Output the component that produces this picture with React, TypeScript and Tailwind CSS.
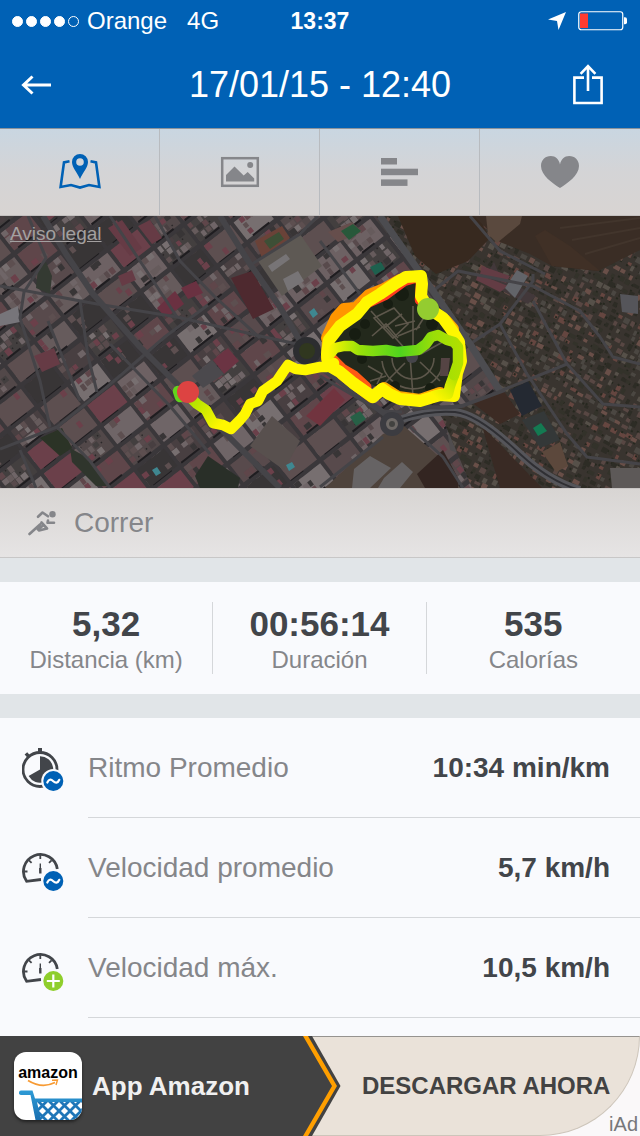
import type { ReactNode } from "react";

const STATS = [
  { value: "5,32", label: "Distancia (km)" },
  { value: "00:56:14", label: "Duración" },
  { value: "535", label: "Calorías" },
];

/* ---------- Icons ---------- */

const BackIcon = () => (
  <svg width="32" height="20" viewBox="0 0 32 20" fill="none" stroke="#fff" strokeWidth="3">
    <path d="M31 10H3.5M12.5 1.5L3.5 10l9 8.5" />
  </svg>
);

const ShareIcon = () => (
  <svg width="32" height="42" viewBox="0 0 32 42" fill="none" stroke="#fff" strokeWidth="2.6">
    <path d="M12 13.600H2.400v25.400h27.200V13.600H20M16 27V2.500M8.600 9.800L16 2.200l7.400 7.600" />
  </svg>
);

const LocationIcon = () => (
  <svg width="18" height="18" viewBox="0 0 18 18" fill="#fff">
    <path d="M18 0L10.5 18L9 9L0 7.6Z" />
  </svg>
);

const BatteryIcon = () => (
  <svg width="50" height="20" viewBox="0 0 50 20" fill="none">
    <rect x="0.75" y="0.75" width="44" height="18" rx="2.5" stroke="#fff" strokeWidth="1.2" />
    <rect x="2" y="2.5" width="8" height="14.5" fill="#ff3b30" />
    <path d="M46 6.2h1a2 2 0 0 1 2 2v3a2 2 0 0 1-2 2h-1z" fill="#fff" />
  </svg>
);

const MapTabIcon = () => (
  <svg width="42" height="36" viewBox="0 0 42 36" fill="none">
    <path
      d="M10.5 7.3L5 8.4L1.6 33l10.4-2l9 2.6l9-2.6l10.4 2L37 8.4l-5.5-1.1"
      stroke="#0061b5"
      strokeWidth="2.6"
    />
    <path
      fillRule="evenodd"
      d="M21 0a8 8 0 0 0-8 8c0 5.4 5 10 8 17c3-7 8-11.6 8-17a8 8 0 0 0-8-8zM21 4.2a3.8 3.8 0 1 1 0 7.6a3.8 3.8 0 0 1 0-7.6z"
      fill="#0061b5"
    />
  </svg>
);

const PhotoTabIcon = () => (
  <svg width="40" height="32" viewBox="0 0 40 32" fill="#85868a">
    <rect x="2.2" y="2.2" width="35.6" height="27.6" fill="none" stroke="#85868a" strokeWidth="2.5" />
    <path d="M6 25.5v-6.5l8.500-8.5l9.2 9l4-3.5l6.5 6.5v3z" />
    <circle cx="30.2" cy="9" r="3" />
  </svg>
);

const SplitsTabIcon = () => (
  <svg width="38" height="28" viewBox="0 0 38 28" fill="#85868a">
    <rect width="16" height="6.5" />
    <rect y="10.7" width="37" height="6.5" />
    <rect y="21.4" width="26.5" height="6.5" />
  </svg>
);

const HeartTabIcon = () => (
  <svg width="38" height="32" viewBox="0 0 38 32" fill="#85868a">
    <path d="M19 32C12 27.500 0 19.500 0 10C0 4 4.200 0 9.800 0C14.500 0 18 3.200 19 8.500C20 3.200 23.500 0 28.200 0C33.800 0 38 4 38 10C38 19.500 26 27.500 19 32Z" />
  </svg>
);

const RunnerIcon = () => (
  <svg
    width="28"
    height="26"
    viewBox="0 0 28 26"
    fill="none"
    stroke="#85868a"
    strokeWidth="2.6"
    strokeLinecap="round"
    strokeLinejoin="round"
  >
    <circle cx="24.5" cy="4.2" r="3.2" fill="#85868a" stroke="none" />
    <path d="M10 6.8L14.5 2.5L20 6.3" />
    <path d="M20 10.5L19.5 12.8L26 12.8" />
    <path d="M1.5 24L12 14.5M13.5 12.5L19 18.5L11 20.5M15 15.5L10 19.5" />
  </svg>
);

const AverageBadge = () => (
  <>
    <circle cx="31.3" cy="33" r="12" fill="#f9fafd" />
    <circle cx="31.3" cy="33" r="10" fill="#0061b5" />
    <path
      d="M25.3 34.5c1.8-4 4-3.2 6-1.3s4.4 2.4 6-1.4"
      fill="none"
      stroke="#fff"
      strokeWidth="2.2"
      strokeLinecap="round"
    />
  </>
);

const MaxBadge = () => (
  <>
    <circle cx="31.3" cy="33" r="12" fill="#f9fafd" />
    <circle cx="31.3" cy="33" r="10" fill="#8fce2c" />
    <path d="M31.3 26.5v13M24.8 33h13" stroke="#fff" strokeWidth="2.2" />
  </>
);

const PaceIcon = () => (
  <svg width="44" height="44" viewBox="0 0 44 44" fill="none">
    <circle cx="18" cy="21.5" r="17" stroke="#42454a" strokeWidth="2.8" />
    <path d="M18 21.5V8.3A13.2 13.2 0 1 1 6.6 28.1Z" fill="#42454a" />
    <path d="M16 0h4v4.5h-4zM2.6 6.5l2.6-2.3l3 3.2l-2.6 2.3z" fill="#42454a" />
    <AverageBadge />
  </svg>
);

const SpeedIcon = ({ children }: { children: ReactNode }) => (
  <svg width="44" height="44" viewBox="0 0 44 44" fill="none" stroke="#42454a">
    <path d="M19 31.5L4.6 33.3A17 17 0 1 1 35.3 21" strokeWidth="2.8" />
    <path
      d="M18.3 7v4M2 23.5h3.5M7 12.3l2.6 2.6M29.6 12.3L27 14.9M31.5 23.5h3"
      strokeWidth="1.8"
    />
    <path d="M18.3 15.5v8" strokeWidth="1.4" />
    <path d="M18.3 20v5.5" strokeWidth="2.4" />
    <g stroke="none">{children}</g>
  </svg>
);

const AmazonAppIcon = () => (
  <svg
    width="68"
    height="68"
    viewBox="0 0 68 68"
    className="shrink-0 rounded-xl bg-white shadow-[0_2px_3px_#222]"
  >
    <defs>
      <linearGradient id="cart" x1="0" y1="0" x2="0" y2="1">
        <stop offset="0" stopColor="#2e9bd6" />
        <stop offset="1" stopColor="#1a6fb0" />
      </linearGradient>
      <pattern id="basket" x="23" y="48" width="11" height="11" patternUnits="userSpaceOnUse">
        <path d="M-1 -1L12 12M12 -1L-1 12" stroke="#1f76b8" strokeWidth="2.8" />
      </pattern>
    </defs>
    <text
      x="34"
      y="26"
      textAnchor="middle"
      fontFamily="Liberation Sans, sans-serif"
      fontWeight="700"
      fontSize="16"
    >
      amazon
    </text>
    <path d="M14 28.5Q28 37 41 30.5" fill="none" stroke="#f79b34" strokeWidth="1.8" />
    <path d="M38 28.3L43.5 28L42 33" fill="none" stroke="#f79b34" strokeWidth="1.4" />
    <path d="M22 48H68V68H26Z" fill="url(#basket)" />
    <path
      d="M5 40.5a2 2 0 0 1 2-2h11.500L21 46.5h47v3.500H23L27 68h-5.500L16.500 43H7a2 2 0 0 1-2-2.5z"
      fill="url(#cart)"
    />
  </svg>
);

/* ---------- Satellite map ---------- */

const createRandom = (seed: number) => () => {
  seed = (seed * 1664525 + 1013904223) % 4294967296;
  return seed / 4294967296;
};

const ROOFS = ["#5d4f50", "#665b5c", "#524849", "#6d6163", "#483f41", "#6b404a", "#6f6567", "#584a4c", "#433f3f", "#776f70", "#5f464a", "#383536"];
const HOUSES = ["#584743", "#654640", "#2d2c25", "#4b4742", "#33322a", "#694f48", "#565049"];

type PathMap = Record<string, string>;

const addRect = (paths: PathMap, fill: string, x: number, y: number, w: number, h: number) => {
  paths[fill] = `${paths[fill] ?? ""}M${x.toFixed(1)} ${y.toFixed(1)}h${w.toFixed(1)}v${h.toFixed(1)}h${(-w).toFixed(1)}z`;
};

// City blocks, each filled with small roofs
const buildBlocks = () => {
  const random = createRandom(17);
  const paths: PathMap = {};
  for (let bx = -200; bx < 560; bx += 38) {
    for (let by = -40; by < 660; by += 27) {
      const tone = Math.floor(random() * ROOFS.length);
      addRect(paths, ROOFS[tone], bx, by, 34, 22);
      for (let x = 0; x < 30; x += 6) {
        for (let y = 0; y < 20; y += 7) {
          if (random() < 0.75) {
            const pick = Math.floor(random() * ROOFS.length);
            addRect(paths, ROOFS[pick], bx + x, by + y, 4 + random() * 3, 5 + random() * 2);
          }
          if (random() < 0.4) {
            addRect(paths, "#2a2728", bx + x + random() * 3, by + y + random() * 4, 1.5, 1.5);
          }
        }
      }
      addRect(paths, "#1f1d20", bx + random() * 8, by + 21, 12 + random() * 14, 2);
    }
  }
  return Object.entries(paths);
};

// Detached houses and trees east of the avenue
const buildHouses = () => {
  const random = createRandom(91);
  const paths: PathMap = {};
  for (let x = 340; x < 860; x += 8) {
    for (let y = -260; y < 280; y += 8) {
      const fill = HOUSES[Math.floor(random() * HOUSES.length)];
      addRect(paths, fill, x + random() * 4, y + random() * 4, 3 + random() * 4, 3 + random() * 3);
      addRect(paths, "#26281f", x + random() * 6, y + random() * 6, 2, 2);
    }
  }
  return Object.entries(paths);
};

const BLOCKS = buildBlocks();
const HOUSE_PATHS = buildHouses();

const MINOR_ROADS = [
  "M0 70L97 88L177 101L260 120L297 128",
  "M0 233L57 211L107 171L166 120L208 89",
  "M28 0L46 42L24 76L20 102L40 165L50 211",
  "M80 85L88 140L97 176",
  "M57 211L90 245L110 272M20 234L36 272",
  "M155 0L180 45L214 80L260 122",
  "M110 0L150 60L177 101M48 105L80 185M110 128L170 190L210 238",
  "M318 0L300 18L252 48",
  "M320 25L360 78",
  "M470 128L500 108L533 65L533 58",
  "M433 75L458 55L533 70L580 95L600 121L613 141L640 148",
  "M533 85L567 148L603 188L640 191",
  "M500 175L567 148M500 108L527 158L567 218L587 241L640 248",
  "M383 221L320 271M410 211L443 241L463 272",
  "M470 0L500 35L545 58M320 160L380 195L402 196",
];

const ParkGround = () => (
  <g>
    <path d="M328 130L340 108L372 84L415 62L424 88L452 112L462 150L455 182L405 184L375 170L330 146Z" fill="#23291c" />
    <g fill="none" stroke="#5d574b" strokeWidth="1.6">
      <path d="M371 95L408 136M410 140L413 180M413 134V90M400 139H365M421 138L450 122M405 147L380 172M420 146L440 165" />
      <path d="M392 142a21 21 0 0 0 42 0M382 145a31 31 0 0 0 61 4" />
      <path d="M374 102l20-10l14 16l-15 14zM384 112l18-14M372 120l14-12l12 14M395 110l20-5M398 120l22-9M430 92l-14 22" />
      <path d="M368 150l14 8l-5 10M370 165l16-5" />
    </g>
    <circle cx="412" cy="141" r="6" fill="#45454a" />
    <g fill="#171d12">
      <circle cx="355" cy="118" r="6" />
      <circle cx="365" cy="108" r="5" />
      <circle cx="402" cy="78" r="7" />
      <circle cx="388" cy="88" r="5" />
      <circle cx="362" cy="143" r="5" />
      <circle cx="432" cy="108" r="6" />
      <circle cx="395" cy="170" r="5" />
      <circle cx="430" cy="172" r="5" />
    </g>
    <path d="M441 142h9l-2 18h-8z" fill="#554444" />
  </g>
);

const RoutePath = () => (
  <g fill="none" strokeLinecap="round" strokeLinejoin="round" strokeWidth="10.5">
    <path d="M327 122L336 102L344 93L356 92L369 79L384 73L400 64" stroke="#ff9500" strokeWidth="12" />
    <path d="M363 89L385 79L404 65L418 61M421 66L420 84" stroke="#ff3b1f" />
    <path d="M329 140L342 153L354 160L366 171" stroke="#ff5a14" strokeWidth="11" />
    <path
      d="M328 123L327 142M342 158L356 169L372 181L384 172L398 181L420 184L440 177M445 104L453 113"
      stroke="#ffab00"
      strokeWidth="12"
    />
    <path d="M178 175L180 181" stroke="#62d41c" />
    <path
      d="M188 179L197 188L206 194L213 207L223 209L231 213L240 204L245 198L250 188L258 185L263 175L277 165L283 156L288 149L296 153L305 154L320 151L327 151L334 147"
      stroke="url(#tail)"
    />
    <path
      d="M328 149L327 138L329 124L340 110L357 98L367 86L380 78L396 67L406 61L421 60L422 68L421 80L428 92L443 102L451 113L459 126L461 145L457 157L454 180L440 179L420 185L400 183L389 178L382 173L373 181L353 167L340 156L328 149"
      stroke="#fff700"
      strokeWidth="12"
    />
    <path d="M454 159L450 170L448 178L434 180" stroke="url(#exit)" />
    <path
      d="M330 138L335 132L344 130L352 130L358 134L373 135L386 134L397 136L418 134L426 128L431 121L438 119L447 124L454 126L458 131L458 147L454 159"
      stroke="url(#loop)"
    />
  </g>
);

const RouteMap = () => (
  <svg
    className="block h-full w-full"
    viewBox="0 0 640 272"
    preserveAspectRatio="xMidYMid slice"
    role="img"
    aria-label="Mapa de la ruta"
  >
    <defs>
      <linearGradient id="tail" gradientUnits="userSpaceOnUse" x1="190" y1="180" x2="222" y2="208">
        <stop offset="0" stopColor="#a6e000" />
        <stop offset="1" stopColor="#fff700" />
      </linearGradient>
      <linearGradient id="exit" gradientUnits="userSpaceOnUse" x1="456" y1="160" x2="436" y2="182">
        <stop offset="0" stopColor="#b0e000" />
        <stop offset="1" stopColor="#fff700" />
      </linearGradient>
      <linearGradient id="loop" gradientUnits="userSpaceOnUse" x1="328" y1="0" x2="460" y2="0">
        <stop offset="0" stopColor="#fff700" />
        <stop offset="0.25" stopColor="#96e00a" />
        <stop offset="0.55" stopColor="#50d41e" />
        <stop offset="0.8" stopColor="#9ade08" />
        <stop offset="1" stopColor="#b0e000" />
      </linearGradient>
      <clipPath id="east">
        <path d="M376 0H640V272H472L440 196L500 176L462 120Z" />
      </clipPath>
    </defs>
    <rect width="640" height="272" fill="#3a373a" />
    <g transform="rotate(-38)">
      {BLOCKS.map(([fill, d]) => (
        <path key={fill} d={d} fill={fill} />
      ))}
    </g>

    {/* Courtyards, gardens and large roofs */}
    <path d="M258 45L300 18L322 50L282 80Z" fill="#5e5954" />
    <path d="M268 50L286 38L290 43L272 56ZM283 63L298 55L304 65L288 75Z" fill="#777476" />
    <path d="M231 62L252 55L274 93L253 103Z" fill="#4e292f" />
    <path d="M255 25L282 10L290 22L262 42Z" fill="#6a4238" />
    <path d="M264 25L279 16L284 23L270 33Z" fill="#3d4f36" />
    <path d="M157 92L175 75L184 88L166 102ZM181 72L196 65L203 77L188 83Z" fill="#6a3141" />
    <path d="M108 12L122 4L142 32L130 40ZM138 10L150 4L162 22L152 28ZM34 140L54 132L60 148L42 156ZM118 60L132 54L136 64L122 70Z" fill="#663b45" />
    <path d="M213 144L228 132L239 145L224 158Z" fill="#6b3443" />
    <path d="M192 160L212 144L224 158L203 172Z" fill="#4b494d" />
    <path d="M306 200L334 172L345 184L320 210Z" fill="#71343f" />
    <path d="M195 260L208 240L240 262L238 272H200Z" fill="#292f28" />
    <path d="M38 52L46 46L52 60L50 78L36 72Z" fill="#343a32" />
    <path d="M0 98L18 90L20 106L0 110Z" fill="#77757a" />
    <path d="M40 222L62 212L72 232L60 240Z" fill="#2b3326" />
    <path d="M70 232L88 242L108 270H96L72 246Z" fill="#2f352c" />
    <path d="M250 230L272 200L300 225L284 254Z" fill="#58504e" />
    <path d="M328 16L352 6L362 16L338 26Z" fill="#664e4c" />
    <path d="M341 15L353 8L361 15L349 24Z" fill="#28583a" />
    <path d="M370 51L381 46L385 53L375 59Z" fill="#1e604e" />
    <path d="M350 201L360 195L366 203L356 210Z" fill="#276046" />
    <path d="M152 254l5-3l4 6l-5 3zM286 249l6-3l3 5l-6 4zM309 96l5-4l4 6l-5 4z" fill="#3f8790" />

    {/* Industrial area south of the park */}
    <path d="M325 272L383 218L404 210L444 245L460 272Z" fill="#4e433c" />
    <path d="M354 253L370 240L391 252L370 272H352ZM384 262L402 246L413 256L400 272H378Z" fill="#666364" />
    <path d="M446 205L463 209L466 240L450 234Z" fill="#504d4e" />
    <path d="M417 258L443 234L458 262V272H425Z" fill="#332521" />

    {/* Fields and houses */}
    <g clipPath="url(#east)">
      <rect x="370" width="270" height="272" fill="#39342f" />
      <g transform="rotate(28 400 0)">
        {HOUSE_PATHS.map(([fill, d]) => (
          <path key={fill} d={d} fill={fill} />
        ))}
      </g>
      <path d="M398 0H478L490 22L468 45L436 58L415 40Z" fill="#37291f" />
      <path d="M474 0H640V34L598 55L552 50L530 38L500 26Z" fill="#3a2d25" />
      <path d="M486 0H522L520 8L497 27L488 18Z" fill="#5a493e" />
      <path d="M535 20L545 14L570 30L600 55L552 50Z" fill="#403026" />
      <path d="M560 12L640 2M572 24L640 12M585 38L640 22" stroke="#42352c" strokeWidth="2" />
      <path d="M494 46L500 60L536 80L528 88L502 75L484 63Z" fill="#42383a" />
      <path d="M478 58L508 70L500 76L476 64ZM482 50L510 60L506 67L480 58Z" fill="#633c44" />
      <path d="M505 72L517 54L528 60L515 82Z" fill="#626469" />
      <path d="M620 78L638 80V98L622 96Z" fill="#55555a" />
      <path d="M470 185L500 170L520 198L500 208Z" fill="#3c2b24" />
      <path d="M510 174L528 165L542 190L522 200Z" fill="#242932" />
      <path d="M522 204L544 195L560 224L540 232Z" fill="#343838" />
      <path d="M533 212L541 207L547 215L538 220Z" fill="#147a52" />
      <path d="M542 236L560 226L568 250L556 256Z" fill="#5c483c" />
      <path d="M482 210L516 245L542 272H500Z" fill="#392a24" />
      <path d="M610 252H640V272H612Z" fill="#5d5958" />
      <path d="M466 140L490 172L470 182L458 170Z" fill="#5a5046" />
    </g>

    <g fill="none" stroke="#454448" strokeLinejoin="round">
      {MINOR_ROADS.map((d) => (
        <path key={d} d={d} strokeWidth="3" />
      ))}
      <path d="M43 0L66 38L93 78L140 131L187 178L233 225L280 272" strokeWidth="6" />
      <path d="M220 0L250 48L280 91L300 125M312 145L388 200" strokeWidth="6" />
      <path d="M380 0L433 75L470 128L500 175" stroke="#4c4c50" strokeWidth="7" />
      <path d="M402 203Q430 194 455 196Q478 198 520 238Q550 266 580 274" stroke="#55555a" strokeWidth="8" />
      <path d="M402 203Q430 194 455 196Q478 198 520 238Q550 266 580 274" stroke="#2f2f33" strokeWidth="2" />
      <path d="M410 190Q440 193 462 190L505 174" strokeWidth="4" />
    </g>
    <circle cx="307" cy="135" r="11" fill="#30371f" stroke="#2c2d30" strokeWidth="6" />
    <circle cx="392" cy="208" r="9" fill="#6d6865" stroke="#3c3c41" strokeWidth="6" />
    <circle cx="392" cy="208" r="3" fill="#424240" />

    <ParkGround />
    <RoutePath />
    <circle cx="188" cy="176" r="11" fill="#dd4342" />
    <circle cx="428" cy="93" r="11" fill="#94cc30" />
  </svg>
);

/* ---------- Page ---------- */

const TABS = [
  { label: "Mapa", icon: <MapTabIcon /> },
  { label: "Fotos", icon: <PhotoTabIcon /> },
  { label: "Parciales", icon: <SplitsTabIcon /> },
  { label: "Frecuencia cardíaca", icon: <HeartTabIcon /> },
];

const DETAILS = [
  { label: "Ritmo Promedio", value: "10:34 min/km", icon: <PaceIcon /> },
  {
    label: "Velocidad promedio",
    value: "5,7 km/h",
    icon: (
      <SpeedIcon>
        <AverageBadge />
      </SpeedIcon>
    ),
  },
  {
    label: "Velocidad máx.",
    value: "10,5 km/h",
    icon: (
      <SpeedIcon>
        <MaxBadge />
      </SpeedIcon>
    ),
  },
];

const StatusBar = () => (
  <div className="grid h-[42px] grid-cols-3 items-center px-3 text-2xl">
    <div className="flex items-center gap-2">
      <span className="flex gap-[3px]">
        {[1, 2, 3, 4, 5].map((dot) => (
          <span
            key={dot}
            className={`size-[11px] rounded-full border border-white ${dot < 5 ? "bg-white" : ""}`}
          ></span>
        ))}
      </span>
      <span>Orange</span>
      <span className="ml-3">4G</span>
    </div>
    <span className="text-center text-[23px] font-bold">13:37</span>
    <div className="flex items-center justify-end gap-3">
      <LocationIcon />
      <BatteryIcon />
    </div>
  </div>
);

const AdBanner = () => (
  <a href="#app-amazon" className="relative flex h-25 bg-[#faf8f9] text-[#424242]">
    <span className="flex w-[303px] shrink-0 items-center gap-2.5 bg-[#424242] pl-3.5 text-[26px] font-bold text-[#f0f0f0]">
      <AmazonAppIcon />
      App Amazon
    </span>
    <span className="flex flex-1 items-center rounded-br-[100px] border-t border-r border-b border-t-[#96938f] border-r-[#cdc5ba] border-b-[#cdc5ba] bg-[#eae2d9]">
      <svg width="38" height="100" viewBox="0 0 38 100" className="shrink-0">
        <path d="M0 0H9L37.5 50L9 100H0Z" fill="#424242" />
        <path d="M0 0H5L34 50L5 100H0L29 50Z" fill="#ff9f00" />
      </svg>
      <span className="flex-1 pl-[21px] text-2xl font-bold whitespace-nowrap">DESCARGAR AHORA</span>
    </span>
    <span className="absolute right-0.5 bottom-0 text-xl leading-6 text-[#77777a]">iAd</span>
  </a>
);

const App = () => {
  return (
    <div className="flex min-h-screen flex-col bg-[#f9fafd] font-['Liberation_Sans',Arial,sans-serif]">
      <header className="bg-[#0061b5] text-white">
        <StatusBar />
        <div className="grid h-[86px] grid-cols-[1fr_auto_1fr] items-center px-5">
          <button type="button" aria-label="Volver" className="justify-self-start">
            <BackIcon />
          </button>
          <h1 className="text-4xl">17/01/15 - 12:40</h1>
          <button type="button" aria-label="Compartir" className="justify-self-end px-4">
            <ShareIcon />
          </button>
        </div>
      </header>

      <nav className="grid h-22 grid-cols-4 border-t border-b border-t-[#8b939c] border-b-[#c3c0bf] bg-linear-to-b from-[#c9d6e1] via-[#d4d4d6] to-[#d8d4d2]">
        {TABS.map((tab) => (
          <button
            key={tab.label}
            type="button"
            aria-label={tab.label}
            className="flex items-center justify-center border-r border-[#b8bbbf] last:border-r-0"
          >
            {tab.icon}
          </button>
        ))}
      </nav>

      <section className="relative h-68 overflow-hidden">
        <RouteMap />
        <a
          href="#aviso-legal"
          className="absolute top-2 left-2.5 text-[19px] leading-5 text-[#a3a0a0] underline"
        >
          Aviso legal
        </a>
      </section>

      <div className="flex h-[70px] items-center gap-[18px] border-t border-b border-t-[#c9c6c5] border-b-[#c8c7c7] bg-linear-to-b from-[#d8d5d3] to-[#e6e4e4] pl-7 text-[28px] text-[#85868a]">
        <RunnerIcon />
        Correr
      </div>

      <section className="grid grid-cols-3 divide-x divide-[#d5d7da] border-y-24 border-[#e1e5e8] py-5">
        {STATS.map((stat) => (
          <div key={stat.label} className="flex h-18 flex-col items-center border-[#d5d7da]">
            <p className="pt-1 text-[35px] leading-9 font-bold text-[#42454a]">{stat.value}</p>
            <p className="pt-0.5 text-2xl leading-8 text-[#85868a]">{stat.label}</p>
          </div>
        ))}
      </section>

      <ul className="flex-1 text-[28px]">
        {DETAILS.map((detail) => (
          <li key={detail.label} className="flex h-25 items-center pl-[22px]">
            <span className="w-[66px] shrink-0 pt-1">{detail.icon}</span>
            <div className="flex h-full flex-1 items-center justify-between border-b border-[#d5d7da] pr-[30px]">
              <span className="text-[#85868a]">{detail.label}</span>
              <span className="font-bold text-[#42454a]">{detail.value}</span>
            </div>
          </li>
        ))}
      </ul>

      <AdBanner />
    </div>
  );
};

export default App;
